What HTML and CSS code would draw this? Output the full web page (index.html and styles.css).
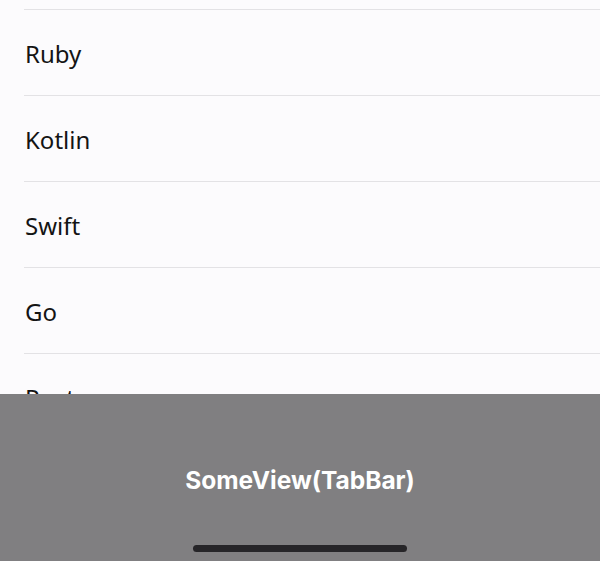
FILE: index.html
```html
<!DOCTYPE html>
<html lang="en">
  <head>
    <meta charset="UTF-8" />
    <meta name="viewport" content="width=device-width, initial-scale=1.0" />
    <title>SomeView</title>
    <link rel="stylesheet" href="styles.css">
  </head>
  <body>
    <div class="screen">
      <ul class="list">
        <li class="row">Ruby</li>
        <li class="row">Kotlin</li>
        <li class="row">Swift</li>
        <li class="row">Go</li>
        <li class="row">Rust</li>
        <li class="row">Python</li>
      </ul>

      <div class="tabbar">
        <div class="tabbar-title">SomeView(TabBar)</div>
        <div class="home-indicator"></div>
      </div>
    </div>
  </body>
</html>
```

FILE: styles.css
```css
body {
  margin: 0;
  padding: 0;
  background-color: #fcfbfd;
  font-family: "Noto Sans", sans-serif;
}
.screen {
  position: relative;
  width: 600px;
  height: 561px;
  overflow: hidden;
}
.list {
  list-style: none;
  margin: 0;
  padding: 9px 0 0 24px;
}
.row {
  display: flex;
  align-items: center;
  height: 83px;
  padding: 2px 0 0 1px;
  border-top: 1px solid #e3e2e5;
  font-size: 24px;
  color: #141414;
}
/* tab bar sits over the bottom of the list */
.tabbar {
  position: absolute;
  left: 0;
  right: 0;
  bottom: 0;
  height: 167px;
  background-color: #807f81;
  display: flex;
  flex-direction: column;
  align-items: center;
}
.tabbar-title {
  margin-top: 71px;
  font-family: Inter, sans-serif;
  font-weight: 700;
  font-size: 24.5px;
  color: #ffffff;
}
.home-indicator {
  margin-top: auto;
  margin-bottom: 9px;
  width: 214px;
  height: 7px;
  border-radius: 4px;
  background-color: #262528;
}
```
